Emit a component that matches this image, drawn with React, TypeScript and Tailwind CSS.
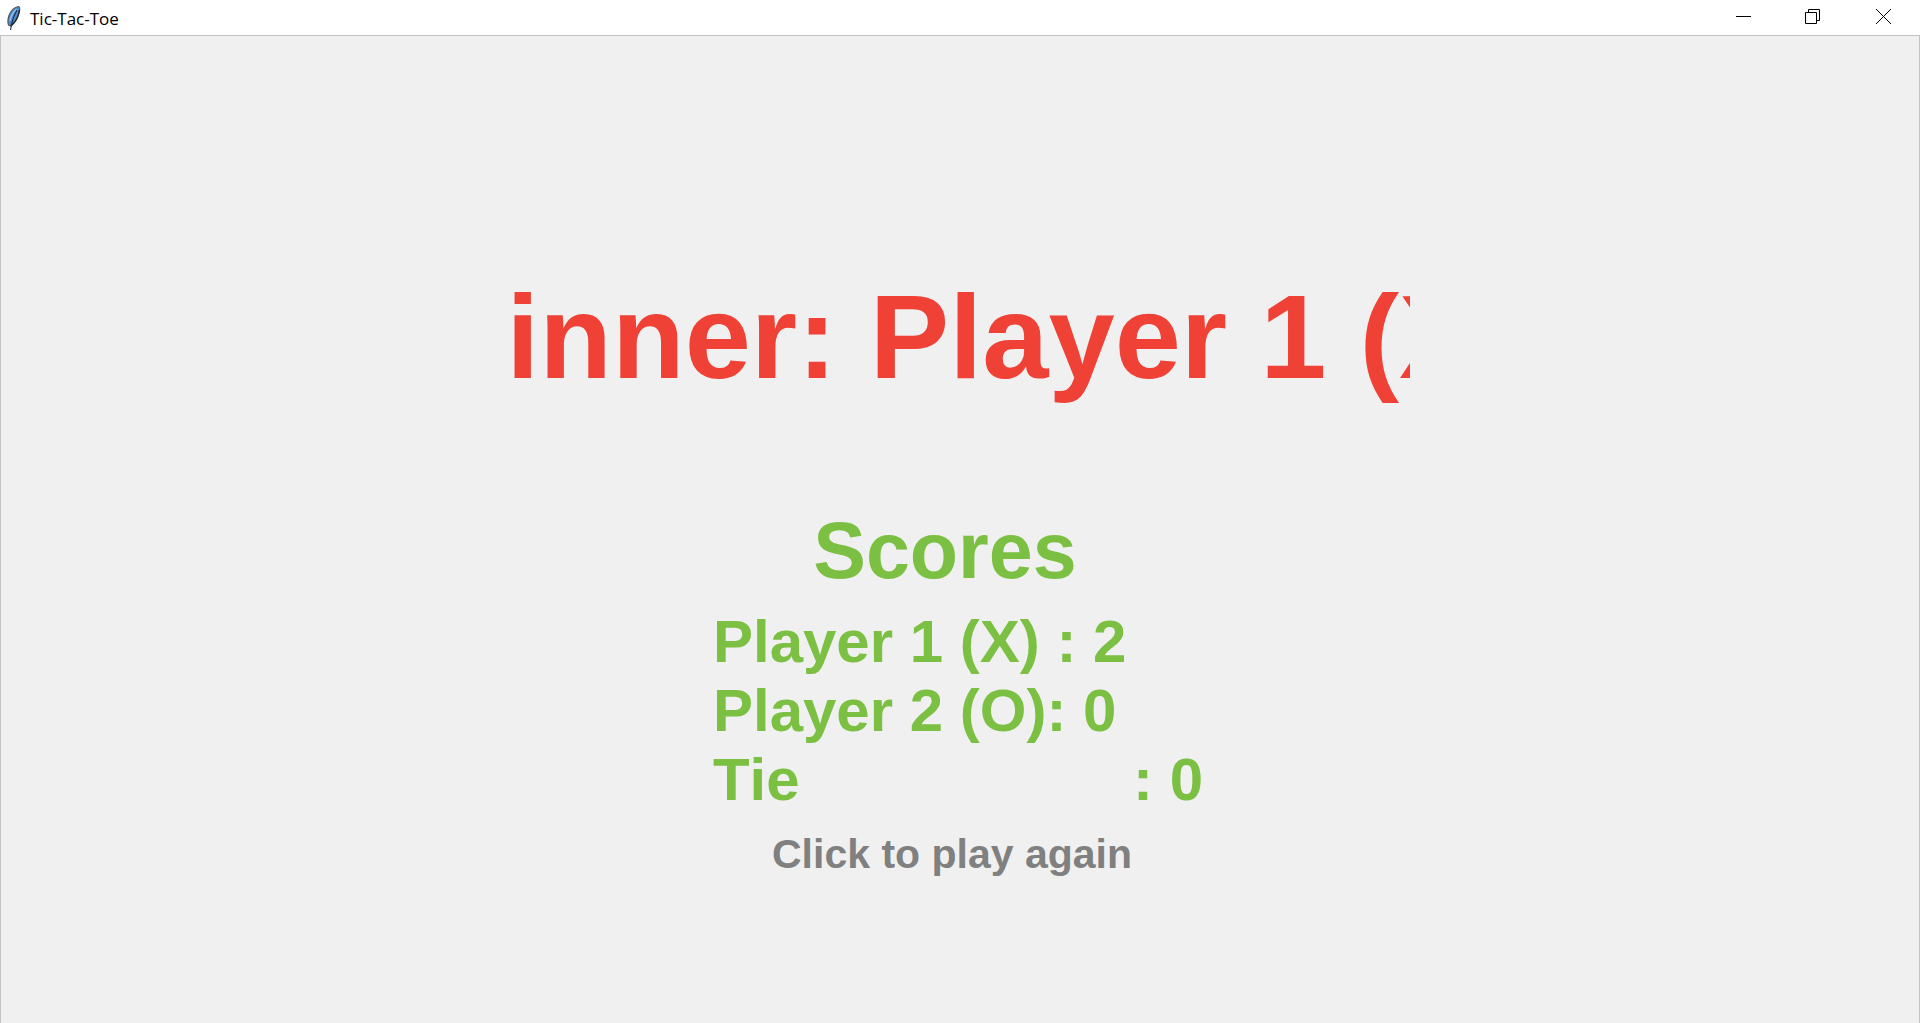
import React from "react";

const winner = "Winner: Player 1 (X)";
const scores = [
  "Player 1 (X) : 2",
  "Player 2 (O): 0",
  "Tie" + " ".repeat(20) + ": 0",
];

function FeatherIcon() {
  return (
    <svg width="16" height="26" viewBox="0 0 16 26" aria-hidden="true">
      <path d="M12.500 1.500C9 2 5 5.500 3 10.500C1.800 14 1.500 17 2.500 20L5 21C9 18 12.500 12 13.500 6C14 3.500 13.800 2 12.500 1.500Z" fill="#4b8ccb" stroke="#55565c" strokeWidth="1.200" />
      <path d="M11 4C7.500 6.500 5 11 4 16" fill="none" stroke="#8fc0ee" strokeWidth="1.500" />
      <path d="M13.500 5C12.500 11 9.500 17 5 21" fill="none" stroke="#1f2227" strokeWidth="1.300" />
      <path d="M11 5C8 10 6 15 4.500 25" fill="none" stroke="#1d3147" strokeWidth="1.100" />
    </svg>
  );
}

function TitleBar() {
  const control = "flex h-full w-[70px] items-start justify-center pt-2";
  return (
    <header className="flex h-9 shrink-0 items-start justify-between border-b border-[#c4c4c4] bg-white">
      <div className="flex h-full items-center gap-2 pl-1.5">
        <FeatherIcon />
        <span className="pt-0.5 font-['Open_Sans',sans-serif] text-[17px] leading-6 text-black">Tic-Tac-Toe</span>
      </div>
      <div className="flex h-full pr-0.5">
        <button type="button" aria-label="Minimize" className={control}>
          <svg width="17" height="17" viewBox="0 0 17 17"><path d="M1 8.500H16" stroke="#000" /></svg>
        </button>
        <button type="button" aria-label="Restore" className={control}>
          <svg width="17" height="17" viewBox="0 0 17 17" fill="none" stroke="#000"><path d="M.5 4.500H11.500V15.500H.5ZM3.500 4.500V1.500H14.500V12.500H11.500" /></svg>
        </button>
        <button type="button" aria-label="Close" className={control}>
          <svg width="17" height="17" viewBox="0 0 17 17"><path d="M1 1L16 16M16 1L1 16" stroke="#000" /></svg>
        </button>
      </div>
    </header>
  );
}

export default function App() {
  return (
    <div className="flex min-h-screen flex-col bg-[#f0f0f0]">
      <TitleBar />
      <main className="flex grow flex-col items-center border-x border-[#c4c4c4] pt-[232px] font-['Liberation_Sans',Arial,sans-serif] font-bold [font-kerning:none]">
        <h1 className="flex w-full max-w-[900px] justify-center overflow-hidden text-[119px] leading-[138px] whitespace-nowrap text-[#ef4135]">
          <span className="mr-2">{winner}</span>
        </h1>
        <h2 className="mt-[100px] pr-[30px] text-[79px] leading-[90px] text-[#7bc043]">Scores</h2>
        <ul className="mt-[11px] pr-1 text-[60px] leading-[69px] whitespace-pre text-[#7bc043]">
          {scores.map((line) => (
            <li key={line}>{line}</li>
          ))}
        </ul>
        <button type="button" className="mt-4 mr-4 text-[41px] leading-[48px] text-[#808080]">
          Click to play again
        </button>
      </main>
    </div>
  );
}
